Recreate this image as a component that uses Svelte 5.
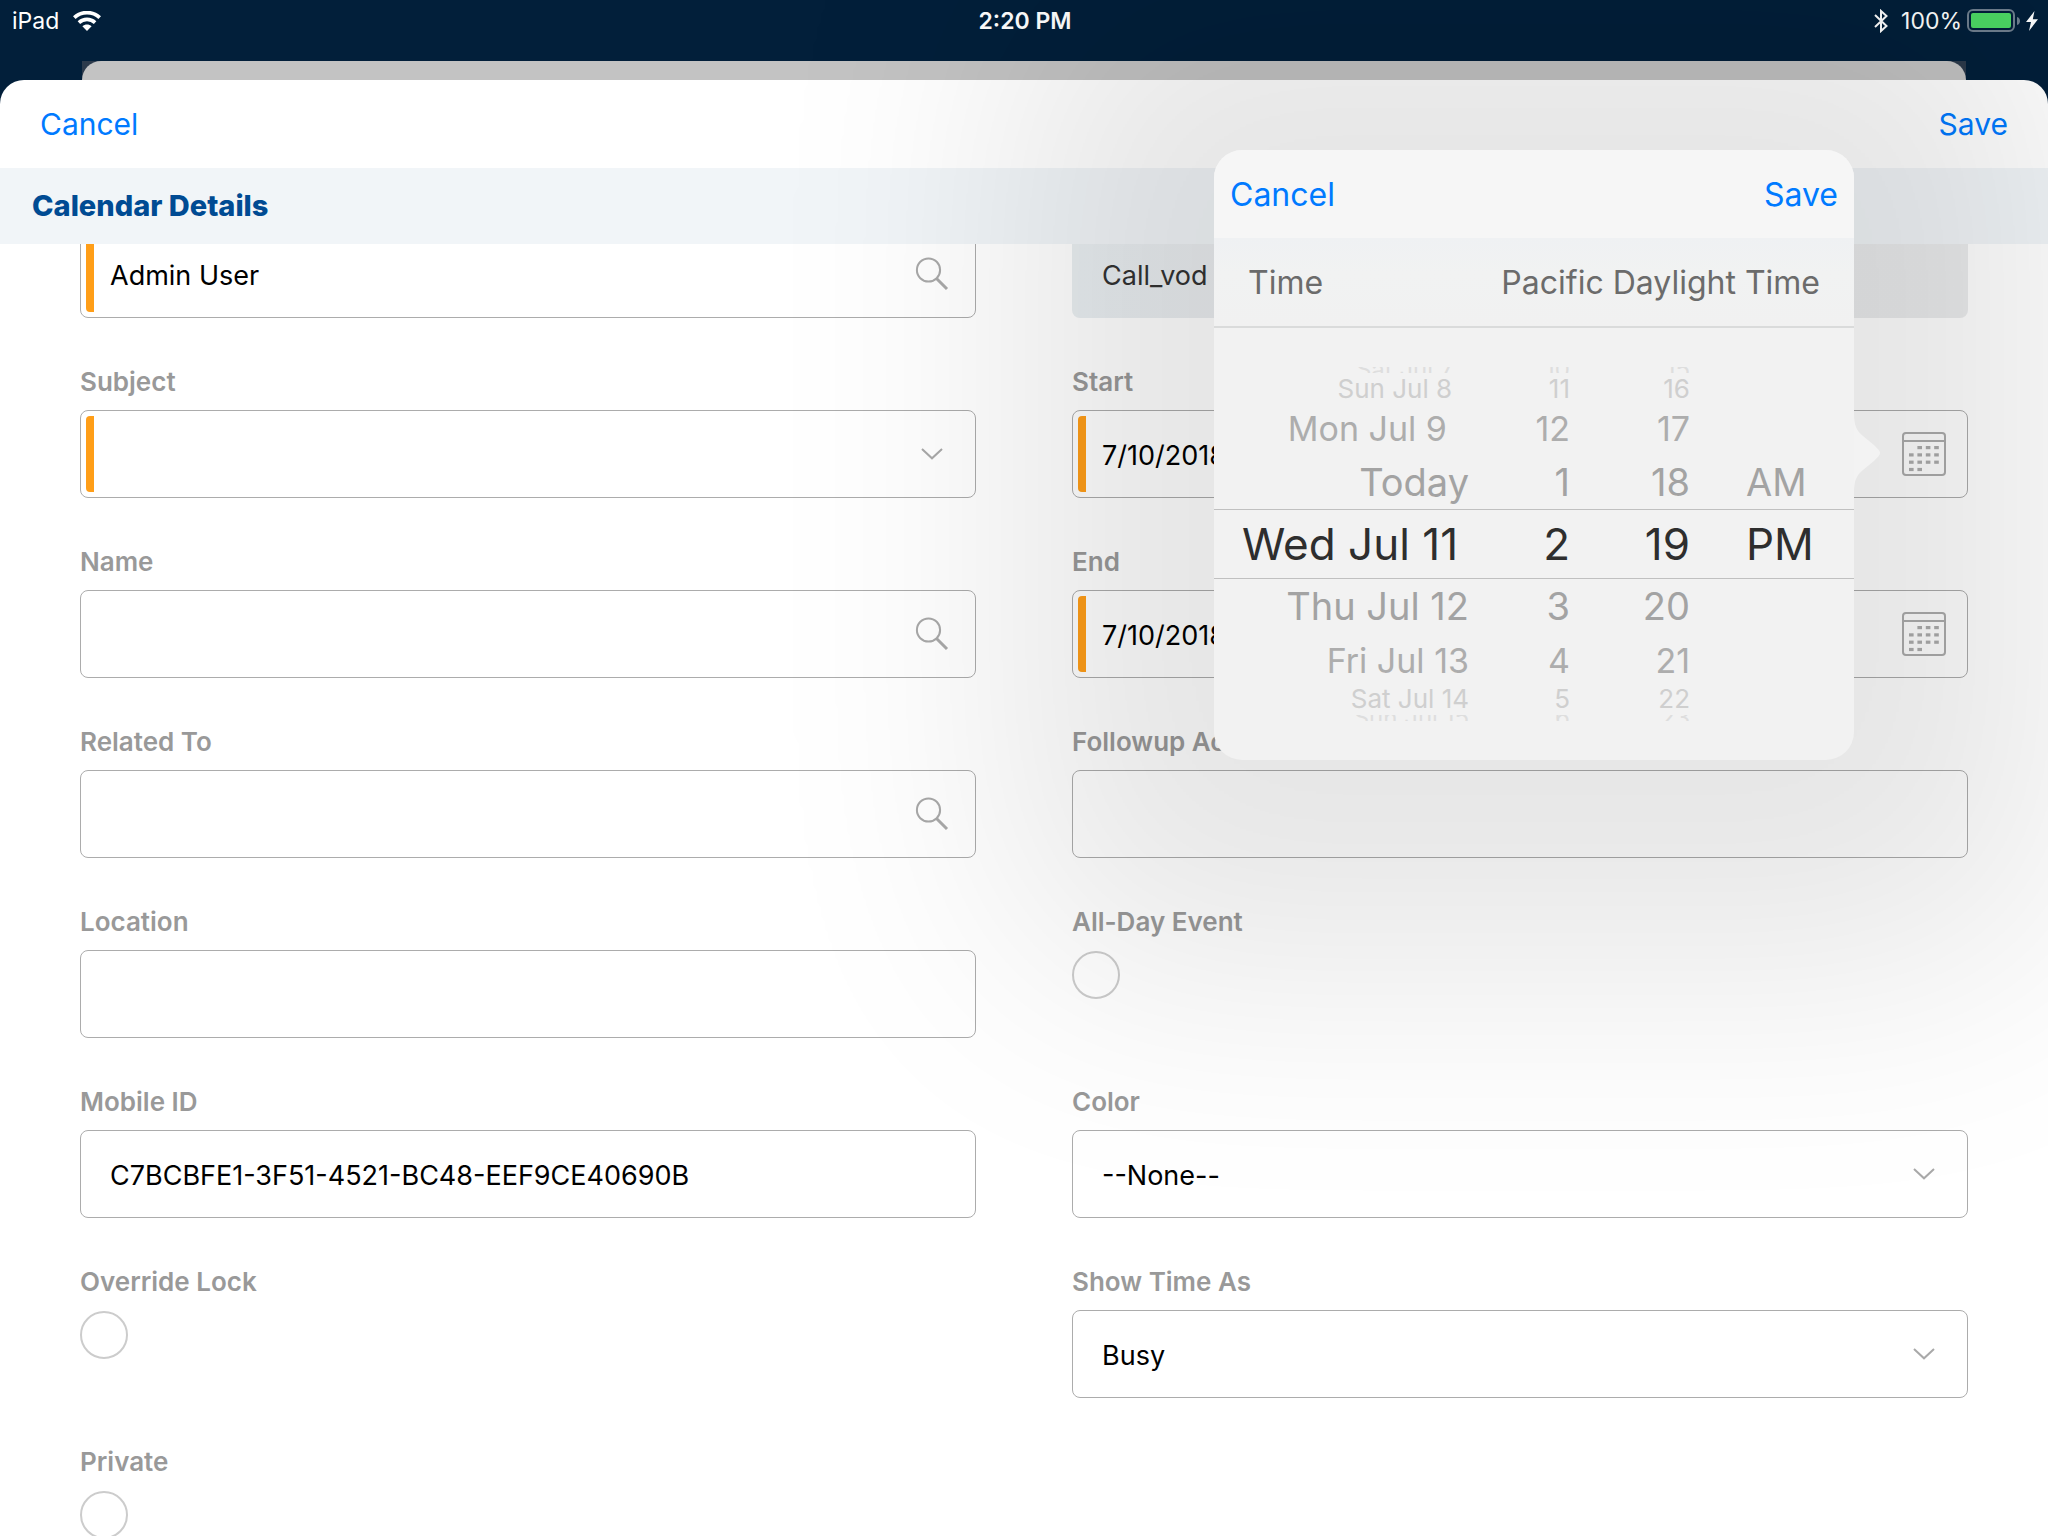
<script>
  const rows = [
    [
      { id: 'owner', aria: 'Assigned To', kind: 'text', value: 'Admin User', icon: 'search', required: true },
      { id: 'type', aria: 'Record Type', kind: 'text', value: 'Call_vod', disabled: true }
    ],
    [
      { id: 'subject', label: 'Subject', kind: 'select', value: '', required: true },
      { id: 'start', label: 'Start', kind: 'text', value: '7/10/2018', icon: 'calendar', required: true }
    ],
    [
      { id: 'name', label: 'Name', kind: 'text', value: '', icon: 'search' },
      { id: 'end', label: 'End', kind: 'text', value: '7/10/2018', icon: 'calendar', required: true }
    ],
    [
      { id: 'related', label: 'Related To', kind: 'text', value: '', icon: 'search' },
      { id: 'followup', label: 'Followup Activity', kind: 'text', value: '' }
    ],
    [
      { id: 'location', label: 'Location', kind: 'text', value: '' },
      { id: 'allday', label: 'All-Day Event', kind: 'check' }
    ],
    [
      { id: 'mobile', label: 'Mobile ID', kind: 'text', value: 'C7BCBFE1-3F51-4521-BC48-EEF9CE40690B' },
      { id: 'color', label: 'Color', kind: 'select', value: '--None--' }
    ],
    [
      { id: 'lock', label: 'Override Lock', kind: 'check' },
      { id: 'showas', label: 'Show Time As', kind: 'select', value: 'Busy' }
    ],
    [{ id: 'private', label: 'Private', kind: 'check' }]
  ];
  const fields = rows.flat();

  // One-digit days end in a figure space so the digits line up under each other.
  const wheel = [
    { size: 'edge top', cells: ['Sat Jul 7\u2007', '10', '15', ''] },
    { size: 'far', cells: ['Sun Jul 8\u2007', '11', '16', ''] },
    { size: 'mid', cells: ['Mon Jul 9\u2007', '12', '17', ''] },
    { size: 'near', cells: ['Today', '1', '18', 'AM'] },
    { size: 'current', cells: ['Wed Jul 11', '2', '19', 'PM'] },
    { size: 'near', cells: ['Thu Jul 12', '3', '20', ''] },
    { size: 'mid', cells: ['Fri Jul 13', '4', '21', ''] },
    { size: 'far', cells: ['Sat Jul 14', '5', '22', ''] },
    { size: 'edge bottom', cells: ['Sun Jul 15', '6', '23', ''] }
  ];

  const dots = [
    [1, 0], [2, 0], [3, 0],
    [0, 1], [1, 1], [2, 1], [3, 1],
    [0, 2], [1, 2], [2, 2], [3, 2],
    [0, 3], [1, 3]
  ];
</script>

{#snippet icon(name)}
  {#if name === 'search'}
    <svg width="36" height="36" viewBox="0 0 36 36" fill="none" stroke="#a9a9a9">
      <circle cx="14.5" cy="14" r="11.6" stroke-width="2" />
      <path d="M22.5 22.5 L33 33" stroke-width="3" />
    </svg>
  {:else if name === 'calendar'}
    <svg width="44" height="44" viewBox="0 0 44 44" fill="none" stroke="#adadad">
      <rect x="1" y="1" width="42" height="42" rx="3" stroke-width="2" />
      <path d="M1 9 H43" stroke-width="2" />
      {#each dots as [c, r]}
        <rect x={7 + c * 8.4} y={14 + r * 7.3} width="4.6" height="3.2" fill="#adadad" stroke="none" />
      {/each}
    </svg>
  {:else if name === 'chevron'}
    <svg width="22" height="12" viewBox="0 0 22 12" fill="none" stroke="#a9a9a9" stroke-width="2">
      <path d="M1 1 L11 10.3 L21 1" />
    </svg>
  {/if}
{/snippet}

<div class="screen">
  <div class="status">
    <div class="side">
      <span>iPad</span>
      <svg width="28" height="20" viewBox="0 0 28 20" fill="none" stroke="#fff">
        <path d="M1.3 6.6 C8.5 0 19.5 0 26.7 6.6" stroke-width="3.8" />
        <path d="M5.9 11.6 C10.5 7.3 17.5 7.3 22.1 11.6" stroke-width="3.6" />
        <path d="M9.4 15.2 C12 12.8 16 12.8 18.6 15.2 L14 20 Z" fill="#fff" stroke="none" />
      </svg>
    </div>
    <strong>2:20 PM</strong>
    <div class="side end">
      <svg class="bt" width="14" height="24" viewBox="0 0 14 24" fill="none" stroke="#fff" stroke-width="2">
        <path d="M1 6 L12.5 17 L7 22 V2 L12.5 7 L1 18" />
      </svg>
      <span>100%</span>
      <svg width="54" height="24" viewBox="0 0 54 24">
        <rect x="1" y="1" width="46" height="21" rx="5" fill="none" stroke="#6f7f8f" stroke-width="2" />
        <rect x="4" y="4" width="40" height="15" rx="2" fill="#4cd964" />
        <path d="M50 8 C54 9 54 15 50 16 Z" fill="#6f7f8f" />
      </svg>
      <svg class="bolt" width="12" height="20" viewBox="0 0 12 20" fill="#fff">
        <path d="M8.5 0 L0 11 H5 L3 20 L12 8.2 H6.8 Z" />
      </svg>
    </div>
  </div>

  <div class="behind"><div class="card"></div></div>

  <div class="sheet">
    <header>
      <button type="button">Cancel</button>
      <button type="button">Save</button>
    </header>
    <h1>Calendar Details</h1>
    <div class="scroll">
      <form>
        {#each fields as f (f.id)}
          <div class="field">
            {#if f.label}<label for={f.id}>{f.label}</label>{/if}
            {#if f.kind === 'check'}
              <input class="round" id={f.id} type="checkbox" />
            {:else}
              <div class="box" class:disabled={f.disabled} class:required={f.required}>
                {#if f.kind === 'select'}
                  <select id={f.id}><option>{f.value}</option></select>
                  <span class="mark">{@render icon('chevron')}</span>
                {:else}
                  <input id={f.id} type="text" value={f.value} aria-label={f.aria} disabled={f.disabled} />
                  {#if f.icon}<button type="button" class="mark" aria-label={f.icon}>{@render icon(f.icon)}</button>{/if}
                {/if}
              </div>
            {/if}
          </div>
        {/each}
      </form>
    </div>
  </div>

  <div class="popover" role="dialog" aria-label="Time">
    <div class="bar">
      <button type="button">Cancel</button>
      <button type="button">Save</button>
    </div>
    <div class="zone">
      <span>Time</span>
      <span>Pacific Daylight Time</span>
    </div>
    <div class="wheel">
      {#each wheel as row}
        <div class="line {row.size}">
          {#each row.cells as cell}<span>{cell}</span>{/each}
        </div>
      {/each}
    </div>
    <svg class="arrow" width="26" height="78" viewBox="0 0 26 78" fill="#f3f3f3">
      <path d="M0 0 C0 12 3 17 9 22 L20 31 C24 35 26 37 26 39 C26 41 24 43 20 47 L9 56 C3 61 0 66 0 78 Z" />
    </svg>
  </div>
</div>

<style>
  :global(body) {
    background: #021f3a;
  }
  .screen {
    position: relative;
    display: flex;
    flex-direction: column;
    height: 100vh;
    overflow: hidden;
    background: #021f3a;
    font-family: Inter, 'Liberation Sans', sans-serif;
    font-size: 27px;
    color: #000;
  }
  button {
    padding: 0;
    border: 0;
    background: none;
    font: inherit;
    color: #007aff;
  }
  svg {
    display: block;
    flex: none;
  }
  .status {
    display: flex;
    align-items: center;
    height: 42px;
    margin-bottom: 19px;
    padding: 0 10px 0 12px;
    color: #fff;
    font-size: 23px;
  }
  .status strong {
    font-weight: 600;
  }
  .side {
    display: flex;
    flex: 1;
    align-items: center;
    gap: 14px;
  }
  .end {
    justify-content: flex-end;
    gap: 5px;
  }
  .bt {
    margin-right: 8px;
  }
  .behind {
    height: 19px;
    margin: 0 82px;
    background: #2c3a4b;
  }
  .card {
    height: 100%;
    border-radius: 20px 20px 0 0;
    background: #c3c3c3;
  }
  .sheet {
    display: flex;
    flex: 1;
    flex-direction: column;
    min-height: 0;
    border-radius: 24px 24px 0 0;
    background: #fff;
  }
  header {
    display: flex;
    align-items: center;
    justify-content: space-between;
    height: 88px;
    padding: 0 40px;
    font-size: 30px;
  }
  h1 {
    margin: 0;
    padding: 0 32px;
    background: #f1f5f8;
    color: #004b93;
    font-size: 29px;
    font-weight: 800;
    line-height: 76px;
  }
  .scroll {
    flex: 1;
    min-height: 0;
    overflow: hidden;
  }
  form {
    display: grid;
    grid-template-columns: 1fr 1fr;
    gap: 48px 96px;
    margin: -14px 80px 0;
  }
  .field {
    display: flex;
    flex-direction: column;
    gap: 12px;
  }
  label {
    color: #999;
    font-size: 26px;
    font-weight: 600;
    line-height: 32px;
  }
  .box {
    position: relative;
    display: flex;
    align-items: center;
    height: 88px;
    box-sizing: border-box;
    padding-right: 21px;
    border: 1px solid #acacac;
    border-radius: 8px;
  }
  .box.disabled {
    border-color: transparent;
    background: linear-gradient(90deg, #e9eef1, #ecedef 25%, #ebeced) border-box;
  }
  .required::before {
    content: '';
    position: absolute;
    top: 5px;
    bottom: 5px;
    left: 5px;
    width: 8px;
    border-radius: 4px 0 0 4px;
    background: #ff9e18;
  }
  .box input,
  .box select {
    flex: 1;
    min-width: 0;
    height: 100%;
    margin: 0;
    padding: 2px 0 0 29px;
    border: 0;
    outline: 0;
    appearance: none;
    background: none;
    font: inherit;
    color: #000;
  }
  .box input:disabled {
    color: #333;
  }
  .mark {
    display: flex;
    justify-content: center;
    width: 44px;
  }
  .round {
    width: 48px;
    height: 48px;
    margin: 1px 0 0;
    border: 2px solid #ccc;
    border-radius: 50%;
    appearance: none;
  }
  .popover {
    position: absolute;
    top: 150px;
    right: 194px;
    width: 640px;
    border-radius: 28px;
    background: #f2f2f2;
    box-shadow: 0 10px 260px 200px rgba(0, 0, 0, 0.1);
  }
  .bar,
  .zone {
    display: flex;
    align-items: center;
    justify-content: space-between;
    height: 88px;
    font-size: 32px;
  }
  .bar {
    padding: 0 16px;
    border-radius: 28px 28px 0 0;
    background: #f6f6f6;
  }
  .zone {
    padding: 0 34px;
    border-bottom: 2px solid #dadbdb;
    background: linear-gradient(#eff1f3, #f1f2f2 40%, #f1f1f1);
    color: #6b6b6b;
  }
  .wheel {
    padding: 39px 0;
  }
  .line {
    display: grid;
    grid-template-columns: 255px 101px 120px 1fr;
    align-items: center;
    box-sizing: border-box;
    text-align: right;
    color: #a3a3a3;
    white-space: nowrap;
  }
  .line span:last-child {
    padding-left: 56px;
    text-align: left;
  }
  .near {
    height: 54px;
    font-size: 38px;
  }
  .mid {
    height: 54px;
    color: #adadad;
    font-size: 34px;
  }
  .far {
    height: 24px;
    color: #cfcfcf;
    font-size: 26px;
    line-height: 24px;
  }
  .edge {
    height: 6px;
    overflow: hidden;
    color: #dedede;
    font-size: 24px;
    line-height: 6px;
  }
  .top {
    margin-bottom: 4px;
  }
  .bottom {
    margin-top: 4px;
  }
  .current {
    height: 70px;
    border: solid #c0c0c0;
    border-width: 1px 0;
    color: #2e2e2e;
    font-size: 44px;
  }
  .current span:first-child {
    padding-left: 28px;
    text-align: left;
  }
  .arrow {
    position: absolute;
    top: 264px;
    left: 100%;
  }
</style>
